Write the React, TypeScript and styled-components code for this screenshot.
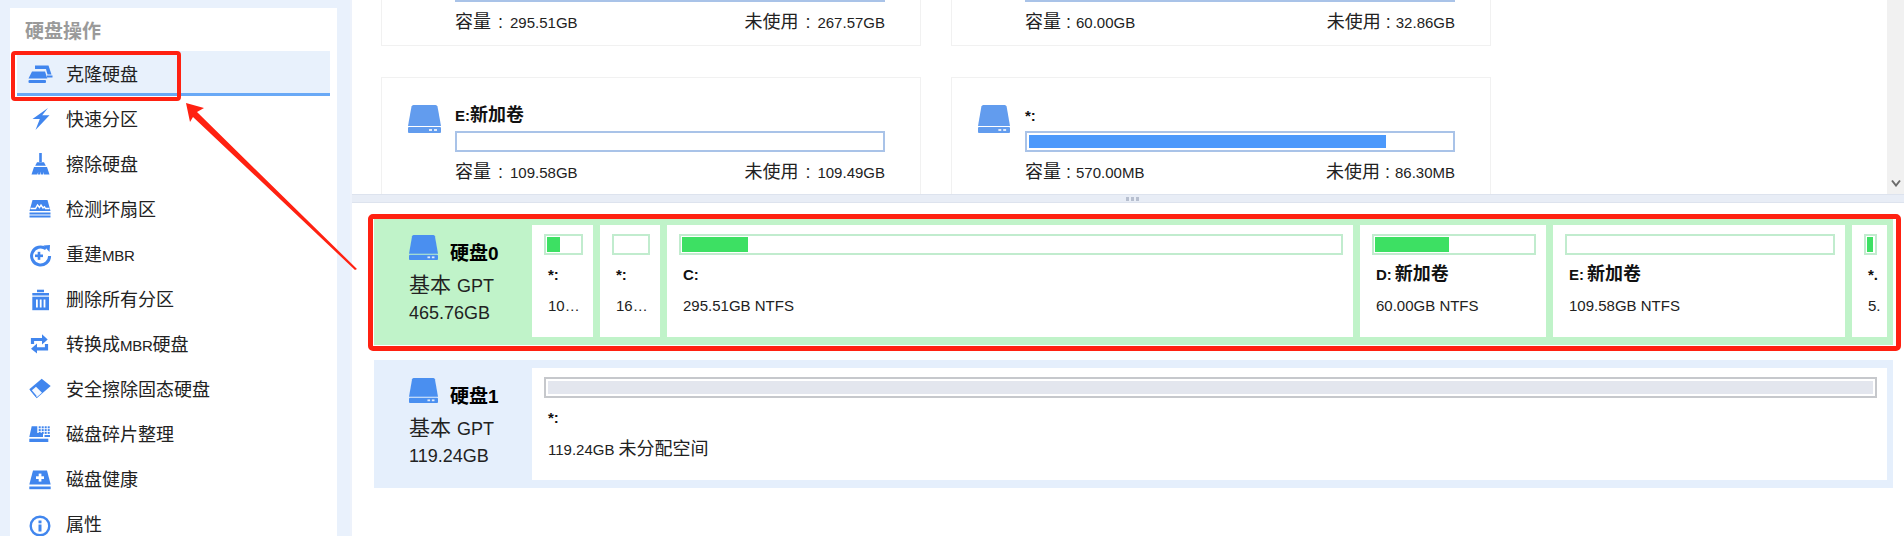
import React from 'react';
import styled, { createGlobalStyle } from 'styled-components';

const CJK = `"Liberation Sans", "Noto Sans CJK SC", sans-serif`;
const BLUE = '#4186ee';

const Global = createGlobalStyle`
  html, body { margin: 0; padding: 0; background: #fff; }
  #root { width: 1904px; height: 536px; overflow: hidden; }
`;

const Page = styled.div`
  position: relative;
  display: flex;
  width: 1904px;
  height: 536px;
  overflow: hidden;
  font-family: ${CJK};
  color: #222;
`;

const Sidebar = styled.aside`
  flex: 0 0 350px;
  box-sizing: border-box;
  padding: 8px 13px 0 10px;
  background: #e9f1fc;
`;

const SidePanel = styled.div`
  height: 100%;
  box-sizing: border-box;
  padding: 0 7px;
  background: #fff;
`;

const SideTitle = styled.div`
  height: 43px;
  box-sizing: border-box;
  padding: 12px 0 0 8px;
  font-size: 19px;
  line-height: 24px;
  font-weight: 700;
  color: #9a9a9a;
`;

const Row = styled.div<{ $active?: boolean }>`
  display: flex;
  align-items: center;
  gap: 13px;
  height: 45px;
  box-sizing: border-box;
  padding: 3px 0 0 10px;
  font-size: 18px;
  line-height: 24px;
  color: #222;
  background: ${p => (p.$active ? '#e8f1fc' : 'transparent')};
  box-shadow: ${p => (p.$active ? 'inset 0 -3px 0 #69a9f6' : 'none')};
`;

const RowIcon = styled.svg`
  flex: 0 0 26px;
  width: 26px;
  height: 26px;
  fill: ${BLUE};
`;

const Small = styled.span`
  font-size: 15px;
  letter-spacing: -0.3px;
`;

const Main = styled.main`
  flex: 1;
  min-width: 0;
  display: flex;
  flex-direction: column;
  border-left: 2px solid #edf2fb;
`;

const TopPane = styled.div`
  flex: 0 0 194px;
  display: flex;
  overflow: hidden;
`;

const CardScroller = styled.div`
  flex: 1;
  min-width: 0;
  overflow: hidden;
`;

const CardGrid = styled.div`
  display: grid;
  grid-template-columns: 540px 540px;
  column-gap: 30px;
  row-gap: 31px;
  margin-top: -73px;
  padding-left: 29px;
`;

const Card = styled.div`
  display: flex;
  height: 119px;
  box-sizing: border-box;
  border: 1px solid #f1f1f1;
  padding: 27px 35px 0 26px;
`;

const CardIconBox = styled.div`
  flex: 0 0 47px;
`;

const CardBody = styled.div`
  flex: 1;
  min-width: 0;
`;

const CardTitle = styled.div`
  height: 26px;
  font-size: 18px;
  line-height: 20px;
  font-weight: 700;
  color: #111;
`;

const CardBar = styled.div`
  height: 21px;
  box-sizing: border-box;
  border: 2px solid #a9c3e8;
  padding: 2px;
  background: #fff;
`;

const CardFill = styled.div`
  height: 100%;
  background: #4c99fb;
`;

const CardStats = styled.div`
  display: flex;
  justify-content: space-between;
  margin-top: 8px;
  font-size: 18px;
  line-height: 24px;
`;

const Num = styled.span`
  font-size: 15px;
`;

const Colon = styled.span<{ $wide?: boolean }>`
  margin: 0 ${p => (p.$wide ? '7px' : '5px')};
`;

const Scrollbar = styled.div`
  flex: 0 0 17px;
  display: flex;
  flex-direction: column;
  justify-content: flex-end;
  align-items: center;
  padding-bottom: 7px;
  box-sizing: border-box;
  background: #f1f1f1;
`;

const Splitter = styled.div`
  flex: 0 0 9px;
  box-sizing: border-box;
  display: flex;
  justify-content: center;
  align-items: center;
  gap: 2px;
  padding-left: 8px;
  background: #e8edf6;
  border-top: 1px solid #dde3ee;
  border-bottom: 1px solid #dde3ee;
`;

const GripDot = styled.i`
  width: 3px;
  height: 4px;
  background: #b7bfcf;
`;

const Disks = styled.div`
  display: flex;
  flex-direction: column;
  gap: 15px;
  padding: 14px 11px 0 22px;
`;

const Disk = styled.section<{ $selected?: boolean }>`
  position: relative;
  display: flex;
  box-sizing: border-box;
  height: 128px;
  padding: 8px 6px 8px 0;
  background: ${p => (p.$selected ? '#c0f3c9' : '#e5effc')};
`;

const RedFrame = styled.div`
  position: absolute;
  top: -3px;
  left: -6px;
  right: -8px;
  bottom: -6px;
  border: 5px solid #ff2111;
  border-radius: 5px;
  pointer-events: none;
`;

const DiskInfo = styled.div`
  flex: 0 0 158px;
  box-sizing: border-box;
  padding: 10px 0 0 35px;
`;

const DiskHead = styled.div`
  display: flex;
  align-items: flex-end;
  height: 25px;
`;

const DiskName = styled.div`
  margin-left: 12px;
  font-size: 19px;
  line-height: 24px;
  font-weight: 700;
  color: #000;
  transform: translateY(6px);
`;

const DiskKind = styled.div`
  margin-top: 12px;
  font-size: 21px;
  line-height: 26px;
  color: #222;
  span { font-size: 18px; margin-left: 6px; }
`;

const DiskSize = styled.div`
  margin-top: 3px;
  font-size: 18px;
  line-height: 22px;
`;

const Tiles = styled.div`
  flex: 1;
  min-width: 0;
  display: flex;
  gap: 7px;
`;

const Tile = styled.div<{ $w?: number }>`
  flex: ${p => (p.$w ? `0 0 ${p.$w}px` : '1')};
  min-width: 0;
  box-sizing: border-box;
  padding-top: 9px;
  background: #fff;
  overflow: hidden;
`;

const TileBar = styled.div<{ $free?: boolean }>`
  height: 21px;
  margin: 0 10px 0 12px;
  box-sizing: border-box;
  border: 2px solid ${p => (p.$free ? '#c6c8cc' : '#c1ecce')};
  padding: ${p => (p.$free ? '2px' : '1px')};
  background: #fff;
`;

const TileFill = styled.div<{ $free?: boolean }>`
  height: 100%;
  background: ${p => (p.$free ? '#e3e6ee' : '#3de063')};
`;

const TileName = styled.div`
  margin: 8px 0 0 16px;
  height: 23px;
  font-size: 18px;
  line-height: 22px;
  font-weight: 700;
  color: #111;
  white-space: nowrap;
  span { font-size: 15px; margin-right: 3px; }
`;

const TileText = styled.div<{ $narrow?: boolean }>`
  margin: 9px ${p => (p.$narrow ? '0' : '9px')} 0 16px;
  font-size: 15px;
  line-height: 22px;
  white-space: nowrap;
  overflow: hidden;
  text-overflow: ${p => (p.$narrow ? 'clip' : 'ellipsis')};
  b { font-weight: 400; font-size: 18px; }
`;

const Overlay = styled.svg`
  position: absolute;
  left: 0;
  top: 0;
  width: 400px;
  height: 300px;
  pointer-events: none;
`;

const ActiveFrame = styled.div`
  position: absolute;
  left: 11px;
  top: 51px;
  width: 170px;
  height: 50px;
  box-sizing: border-box;
  border: 4px solid #ff2111;
  border-radius: 4px;
  pointer-events: none;
`;

const W = '#fff';

const icons: React.ReactNode[] = [
  <>
    <path d="M8 3.500h13.500l3 9h-4l-1.500-5.500H8z" />
    <path d="M5 9.500h13l2.300 7H1.500z" />
    <rect x="1.500" y="18" width="17.500" height="3" rx="1" />
    <rect x="20" y="13.500" width="5.500" height="2" />
  </>,
  <path d="M21 1 5.500 12h7.300L8.500 23 22.500 8.200h-7.300z" />,
  <>
    <rect x="12.200" y="1" width="2.600" height="9" />
    <path d="M8.200 13.800 10 10.300h7l1.800 3.500z" />
    <path d="M7 15h13l2.500 7.500h-5.400l-.9-2.600.1 2.600h-2.200l-.4-3-.4 3H11l.2-2.600-.9 2.600H4.500z" />
  </>,
  <>
    <path d="M5.500 3h15l3 11h-21z" />
    <path d="M3.500 11.500h5l2-3.500 2 2.500 1.500-2.500 2 3 1.500-1.200 1 1.700h4" fill="none" stroke={W} strokeWidth="1.400" />
    <rect x="2.500" y="15.500" width="21" height="2" />
    <rect x="2.500" y="18.500" width="21" height="2" />
  </>,
  <>
    <path d="M19 6.800A9 9 0 1 0 22.600 14" fill="none" stroke={BLUE} strokeWidth="3" />
    <path d="M16.500 3.500 23 3l-.5 7z" />
    <rect x="8" y="12.500" width="8" height="2.600" />
    <rect x="10.700" y="9.800" width="2.600" height="8" />
  </>,
  <>
    <rect x="10" y="2.700" width="7" height="2.500" />
    <rect x="5.300" y="6" width="16.700" height="2.500" />
    <path d="M5.300 9.700H22v13.500H5.300z" />
    <rect x="9" y="12.500" width="1.800" height="8" fill={W} />
    <rect x="12.800" y="12.500" width="1.800" height="8" fill={W} />
    <rect x="16.600" y="12.500" width="1.800" height="8" fill={W} />
  </>,
  <>
    <path d="M5.500 12V7.500h11" fill="none" stroke={BLUE} strokeWidth="3.200" />
    <path d="M15 2.300 20.700 7.500 15 12.500z" />
    <path d="M19.500 12v4.800H9" fill="none" stroke={BLUE} strokeWidth="3.200" />
    <path d="M10 11.500 4 16.800l6 4.700z" />
  </>,
  <>
    <path d="M14.700 1.700 23.700 9 9.700 21.300 2.300 12.300z" />
    <path d="M5.800 12.600 9 9.800 15 15.800 10 20 7.500 18.500 4.500 13.800z" fill={W} opacity=".95" />
    <path d="M4.200 12.600 9.700 19l-1 .9-5.400-6.400z" />
  </>,
  <>
    <path d="M4.700 4.300h5.600V11H16v4H2.300z" />
    <rect x="2.300" y="16.700" width="19" height="3.300" />
    {[0, 1, 2, 3].map(i => [0, 1, 2].map(j => (
      <rect key={`${i}${j}`} x={11.700 + i * 3} y={4.300 + j * 2.800} width="2" height="2" />
    )))}
    <rect x="17.500" y="13" width="5.500" height="2" />
  </>,
  <>
    <path d="M6 3.500h14l3.700 14H2.300z" />
    <rect x="2.300" y="19.500" width="21.400" height="2.700" />
    <rect x="9" y="9.300" width="8" height="2.700" fill={W} />
    <rect x="11.700" y="6.600" width="2.700" height="8" fill={W} />
  </>,
  <>
    <circle cx="13" cy="14" r="9.300" fill="none" stroke={BLUE} strokeWidth="2.400" />
    <rect x="11.500" y="8.500" width="3" height="2.800" />
    <rect x="11.500" y="12.500" width="3" height="7" />
  </>,
];

const menu: React.ReactNode[] = [
  '克隆硬盘',
  '快速分区',
  '擦除硬盘',
  '检测坏扇区',
  <>重建<Small>MBR</Small></>,
  '删除所有分区',
  <>转换成<Small>MBR</Small>硬盘</>,
  '安全擦除固态硬盘',
  '磁盘碎片整理',
  '磁盘健康',
  '属性',
];

const DriveIcon = ({ w, h, color }: { w: number; h: number; color: string }) => (
  <svg width={w} height={h} viewBox="0 0 33 28" preserveAspectRatio="none" style={{ display: 'block', flex: 'none' }}>
    <path d="M5.500 0h22q1.500 0 2 1.500L33 21H0L3.500 1.500q.5-1.500 2-1.500z" fill={color} />
    <rect x="0" y="22" width="33" height="6" rx="1" fill={color} />
    <rect x="21" y="24" width="3" height="2" fill="#dfeafb" />
    <rect x="26" y="24" width="3" height="2" fill="#dfeafb" />
  </svg>
);

type CardData = { title: React.ReactNode; used: number; cap: string; free: string; iconW: number; wide: boolean };

const cards: CardData[] = [
  { title: 'C:', used: 0, cap: '295.51GB', free: '267.57GB', iconW: 33, wide: true },
  { title: 'D:', used: 0, cap: '60.00GB', free: '32.86GB', iconW: 32, wide: false },
  { title: <><Num>E:</Num>新加卷</>, used: 0, cap: '109.58GB', free: '109.49GB', iconW: 33, wide: true },
  { title: <Num>*:</Num>, used: 84.500, cap: '570.00MB', free: '86.30MB', iconW: 32, wide: false },
];

type TileData = { w?: number; fill: number; name: React.ReactNode; text: string; narrow?: boolean };

const tiles0: TileData[] = [
  { w: 61, fill: 39, name: <span>*:</span>, text: '100.00MB FAT32' },
  { w: 60, fill: 0, name: <span>*:</span>, text: '16.00MB 其他' },
  { w: 686, fill: 10, name: <span>C:</span>, text: '295.51GB NTFS' },
  { w: 186, fill: 47, name: <><span>D:</span>新加卷</>, text: '60.00GB NTFS' },
  { w: 292, fill: 0, name: <><span>E:</span>新加卷</>, text: '109.58GB NTFS' },
  { w: 35, fill: 85, name: <span>*.</span>, text: '5.', narrow: true },
];

export default function App() {
  return (
    <Page>
      <Global />
      <Sidebar>
        <SidePanel>
          <SideTitle>硬盘操作</SideTitle>
          {menu.map((m, i) => (
            <Row key={i} $active={i === 0}>
              <RowIcon viewBox="0 0 26 26">{icons[i]}</RowIcon>
              <span>{m}</span>
            </Row>
          ))}
        </SidePanel>
      </Sidebar>
      <Main>
        <TopPane>
          <CardScroller>
            <CardGrid>
              {cards.map((c, i) => (
                <Card key={i}>
                  <CardIconBox>
                    <DriveIcon w={c.iconW} h={28} color="#629cee" />
                  </CardIconBox>
                  <CardBody>
                    <CardTitle>{c.title}</CardTitle>
                    <CardBar>{c.used > 0 && <CardFill style={{ width: `${c.used}%` }} />}</CardBar>
                    <CardStats>
                      <span>容量<Colon $wide={c.wide}>:</Colon><Num>{c.cap}</Num></span>
                      <span>未使用<Colon $wide={c.wide}>:</Colon><Num>{c.free}</Num></span>
                    </CardStats>
                  </CardBody>
                </Card>
              ))}
            </CardGrid>
          </CardScroller>
          <Scrollbar>
            <svg width="10" height="8" viewBox="0 0 10 8">
              <path d="M1 1.500 5 6.500 9 1.500" fill="none" stroke="#6b6b6b" strokeWidth="2" />
            </svg>
          </Scrollbar>
        </TopPane>
        <Splitter><GripDot /><GripDot /><GripDot /></Splitter>
        <Disks>
          <Disk $selected>
            <DiskInfo>
              <DiskHead>
                <DriveIcon w={29} h={25} color="#4a8ff0" />
                <DiskName>硬盘0</DiskName>
              </DiskHead>
              <DiskKind>基本<span>GPT</span></DiskKind>
              <DiskSize>465.76GB</DiskSize>
            </DiskInfo>
            <Tiles>
              {tiles0.map((t, i) => (
                <Tile key={i} $w={t.w}>
                  <TileBar>{t.fill > 0 && <TileFill style={{ width: `${t.fill}%` }} />}</TileBar>
                  <TileName>{t.name}</TileName>
                  <TileText $narrow={t.narrow}>{t.text}</TileText>
                </Tile>
              ))}
            </Tiles>
            <RedFrame />
          </Disk>
          <Disk>
            <DiskInfo>
              <DiskHead>
                <DriveIcon w={29} h={25} color="#4a8ff0" />
                <DiskName>硬盘1</DiskName>
              </DiskHead>
              <DiskKind>基本<span>GPT</span></DiskKind>
              <DiskSize>119.24GB</DiskSize>
            </DiskInfo>
            <Tiles>
              <Tile>
                <TileBar $free><TileFill $free /></TileBar>
                <TileName><span>*:</span></TileName>
                <TileText>119.24GB <b>未分配空间</b></TileText>
              </Tile>
            </Tiles>
          </Disk>
        </Disks>
      </Main>
      <ActiveFrame />
      <Overlay viewBox="0 0 400 300">
        <polygon points="186,103 204,108 197,112 357,269 355,270 193,117 190,122" fill="#ff2111" />
      </Overlay>
    </Page>
  );
}
